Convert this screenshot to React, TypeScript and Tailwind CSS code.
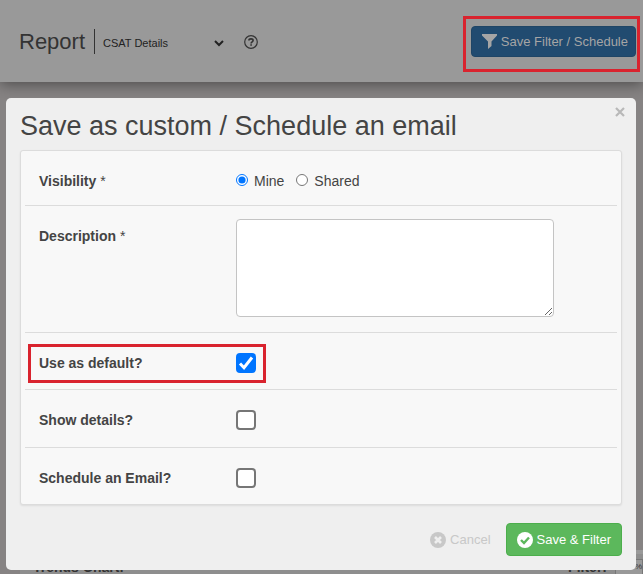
import type { ReactNode } from "react";

type RowProps = { label: string; htmlFor: string; required?: boolean; className: string; children: ReactNode };

function Row({ label, htmlFor, required, className, children }: RowProps) {
  return (
    <div className={`relative flex items-start border-[#dcdcdc] pl-[14px] ${className}`}>
      <label htmlFor={htmlFor} className="w-[197px] shrink-0 leading-5 font-bold">
        {label}
        {required && <span className="font-normal"> *</span>}
      </label>
      {children}
    </div>
  );
}

function CheckBox({ id, defaultChecked }: { id: string; defaultChecked?: boolean }) {
  return (
    <span className="relative flex size-5">
      <input
        id={id}
        type="checkbox"
        defaultChecked={defaultChecked}
        className="peer size-5 appearance-none rounded-[4px] border-2 border-[#767676] bg-white checked:border-[#0075ff] checked:bg-[#0075ff]"
      />
      <svg viewBox="0 0 20 20" className="pointer-events-none absolute inset-0 hidden size-5 peer-checked:block" fill="none" stroke="#fff" strokeWidth="3">
        <path d="M4 10.5l4 4.2L16 4.5" />
      </svg>
    </span>
  );
}

export default function App() {
  return (
    <div className="relative flex h-screen flex-col overflow-hidden bg-[#868383] font-['Liberation_Sans',Arial,sans-serif] text-[14px] text-[#444]">
      <header className="relative flex h-[82px] shrink-0 items-center justify-between bg-[#999] pt-px pr-[7px] pl-[19px] shadow-[0_2px_14px_rgba(0,0,0,0.45)]">
        <div className="flex items-center text-[#333]">
          <h1 className="text-[22px] leading-7">Report</h1>
          <div className="ml-[9px] flex h-[25px] items-center border-l border-[#333] pl-2">
            <div className="relative flex items-center pt-[3px]">
              <select aria-label="Report" className="w-[129px] appearance-none bg-transparent text-[11px] text-[#222]">
                <option>CSAT Details</option>
              </select>
              <svg viewBox="0 0 10 8" className="pointer-events-none absolute right-2 h-2 w-[10px]" fill="none" stroke="#222" strokeWidth="2">
                <path d="M1 2l4 4 4-4" />
              </svg>
            </div>
          </div>
          <button aria-label="Help" className="ml-[12px]">
            <svg viewBox="0 0 14 14" className="size-[14px]" fill="none" stroke="#333">
              <circle cx="7" cy="7" r="6.3" strokeWidth="1.2" />
              <path d="M4.9 5.5C5 3.3 9.1 3.4 9.1 5.5C9.1 6.8 7.1 6.8 7.1 8.4" strokeWidth="1.6" />
              <path d="M7.1 9.2v1.6" strokeWidth="1.6" />
            </svg>
          </button>
        </div>
        <div className="relative">
          <button className="flex h-[31px] items-center gap-1 rounded-[4px] border border-[#1f4566] bg-[#214b70] pr-[7px] pl-[10px] text-[13px] text-[#a5a5a5]">
            <svg viewBox="0 0 15 15" className="size-[15px]" fill="#a5a5a5">
              <path d="M0 0h15v1.5L9.5 7.5V12L6 15V7.5L0 1.5z" />
            </svg>
            Save Filter / Schedule
          </button>
          <div className="pointer-events-none absolute -top-[10px] -right-1 -bottom-[15px] -left-2 border-[3px] border-[#d9232e]" />
        </div>
      </header>

      <main className="flex flex-1 flex-col justify-end pl-[20px]">
        <section className="flex h-[24px] items-end justify-between border-t-4 border-[#999] bg-[#8e8e8e] pl-[13px] text-[14px] leading-[14px] font-bold text-[#333]">
          <span>Trends Chart:</span>
          <span className="flex items-end gap-2">
            Filter:
            <span className="w-[28px] border border-b-0 border-[#777] bg-[#999] text-right text-[8px] font-normal">%</span>
          </span>
        </section>
      </main>

      <div role="dialog" aria-labelledby="title" className="absolute top-[98px] right-[7px] left-[6px] rounded-[5px] bg-[#efefef] px-[14px] pt-3 pb-[14px]">
        <button aria-label="Close" className="absolute top-[9px] right-[11px]">
          <svg viewBox="0 0 10 10" className="size-[10px]" fill="none" stroke="#b8b8b8" strokeWidth="2.2">
            <path d="M1 1l8 8M9 1L1 9" />
          </svg>
        </button>
        <h2 id="title" className="text-[27px] leading-8">Save as custom / Schedule an email</h2>
        <form>
          <div className="mt-2 rounded-[3px] border border-[#dcdcdc] bg-[#f8f8f8] px-1 shadow-[0_1px_2px_rgba(0,0,0,0.08)]">
            <Row label="Visibility" htmlFor="mine" required className="h-[55px] border-b pt-5">
              <div className="flex items-center leading-5">
                <input id="mine" type="radio" name="visibility" defaultChecked className="mb-[3px] size-[12px] accent-[#0075ff]" />
                <label htmlFor="mine" className="ml-[6px]">Mine</label>
                <input id="shared" type="radio" name="visibility" className="mb-[3px] ml-3 size-[12px]" />
                <label htmlFor="shared" className="ml-[6px]">Shared</label>
              </div>
            </Row>
            <Row label="Description" htmlFor="description" required className="h-[127px] border-b pt-5">
              <textarea id="description" className="-mt-[7px] h-[98px] w-[318px] rounded-[4px] border border-[#c4c4c4] bg-white" />
            </Row>
            <Row label="Use as default?" htmlFor="default" className="h-[57px] border-b pt-5">
              <CheckBox id="default" defaultChecked />
              <div className="pointer-events-none absolute top-[11px] left-[3px] h-[39px] w-[238px] border-[3px] border-[#d9232e]" />
            </Row>
            <Row label="Show details?" htmlFor="details" className="h-[58px] border-b pt-5">
              <CheckBox id="details" />
            </Row>
            <Row label="Schedule an Email?" htmlFor="schedule" className="h-[56px] pt-5">
              <CheckBox id="schedule" />
            </Row>
          </div>
          <div className="mt-[18px] flex items-center justify-end gap-[15px] text-[13px]">
            <button type="button" className="flex items-center gap-1 text-[#c8c8c8]">
              <svg viewBox="0 0 16 16" className="size-4">
                <circle cx="8" cy="8" r="8" fill="#c8c8c8" />
                <path d="M5 5l6 6M11 5l-6 6" stroke="#efefef" strokeWidth="2.6" />
              </svg>
              Cancel
            </button>
            <button type="button" className="flex h-[33px] items-center gap-1 rounded-[4px] border border-[#4cae4c] bg-[#5cb85c] px-[10px] text-white">
              <svg viewBox="0 0 16 16" className="size-4">
                <circle cx="8" cy="8" r="8" fill="#fff" />
                <path d="M4 8l3 3 5-5.5" fill="none" stroke="#5cb85c" strokeWidth="2.4" />
              </svg>
              Save &amp; Filter
            </button>
          </div>
        </form>
      </div>
    </div>
  );
}
